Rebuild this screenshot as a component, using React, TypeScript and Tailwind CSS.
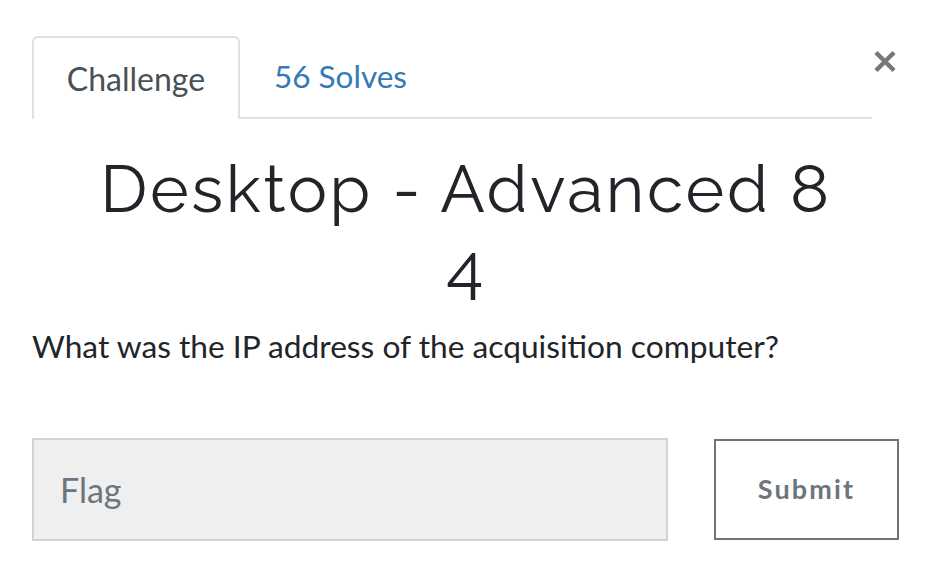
export default function App() {
  return (
    <div className="w-[932px] h-[584px] bg-white font-['Lato','Liberation_Sans',sans-serif] text-[#212529] relative overflow-hidden">
      <button className="absolute right-[35px] top-[50px] w-[24px] h-[23px] text-[#777]" aria-label="Close">
        <svg viewBox="0 0 24 23" width="24" height="23">
          <path d="M3 2.5 L21 20.5 M21 2.5 L3 20.5" stroke="currentColor" strokeWidth="4.5" fill="none" />
        </svg>
      </button>

      <div className="pl-[32px] pr-[60px] pt-[36px]">
        <div className="flex border-b-2 border-[#dee2e6]">
          <div className="w-[208px] h-[83px] -mb-[2px] flex items-center justify-center border-2 border-b-0 border-[#dee2e6] rounded-t-[6px] bg-white text-[32px] text-[#495057]">
            Challenge
          </div>
          <div className="h-[81px] pl-[34px] flex items-center text-[31.5px] text-[#337ab7]">
            56 Solves
          </div>
        </div>

        <h3 className="mt-[26px] -mr-[28px] text-center font-['Raleway','Lato',sans-serif] lining-nums text-[66px] leading-[88px] tracking-[0.04em] font-normal text-[#212529]">
          Desktop - Advanced 8
          <br />
          4
        </h3>

        <p className="mt-[5px] text-[31.7px] leading-[40px] text-[#212529]">
          What was the IP address of the acquisition computer?
        </p>

        <div className="mt-[72px] flex items-center -mr-[27px]">
          <div className="w-[636px] h-[103px] bg-[#efefef] border-2 border-[#ced4da] flex items-center pl-[26px] text-[34px] text-[#6c757d]">
            Flag
          </div>
          <button className="ml-[46px] w-[185px] h-[101px] border-2 border-[#6c757d] bg-white text-[27px] font-bold tracking-[0.08em] text-[#6c757d]">
            Submit
          </button>
        </div>
      </div>
    </div>
  );
}
